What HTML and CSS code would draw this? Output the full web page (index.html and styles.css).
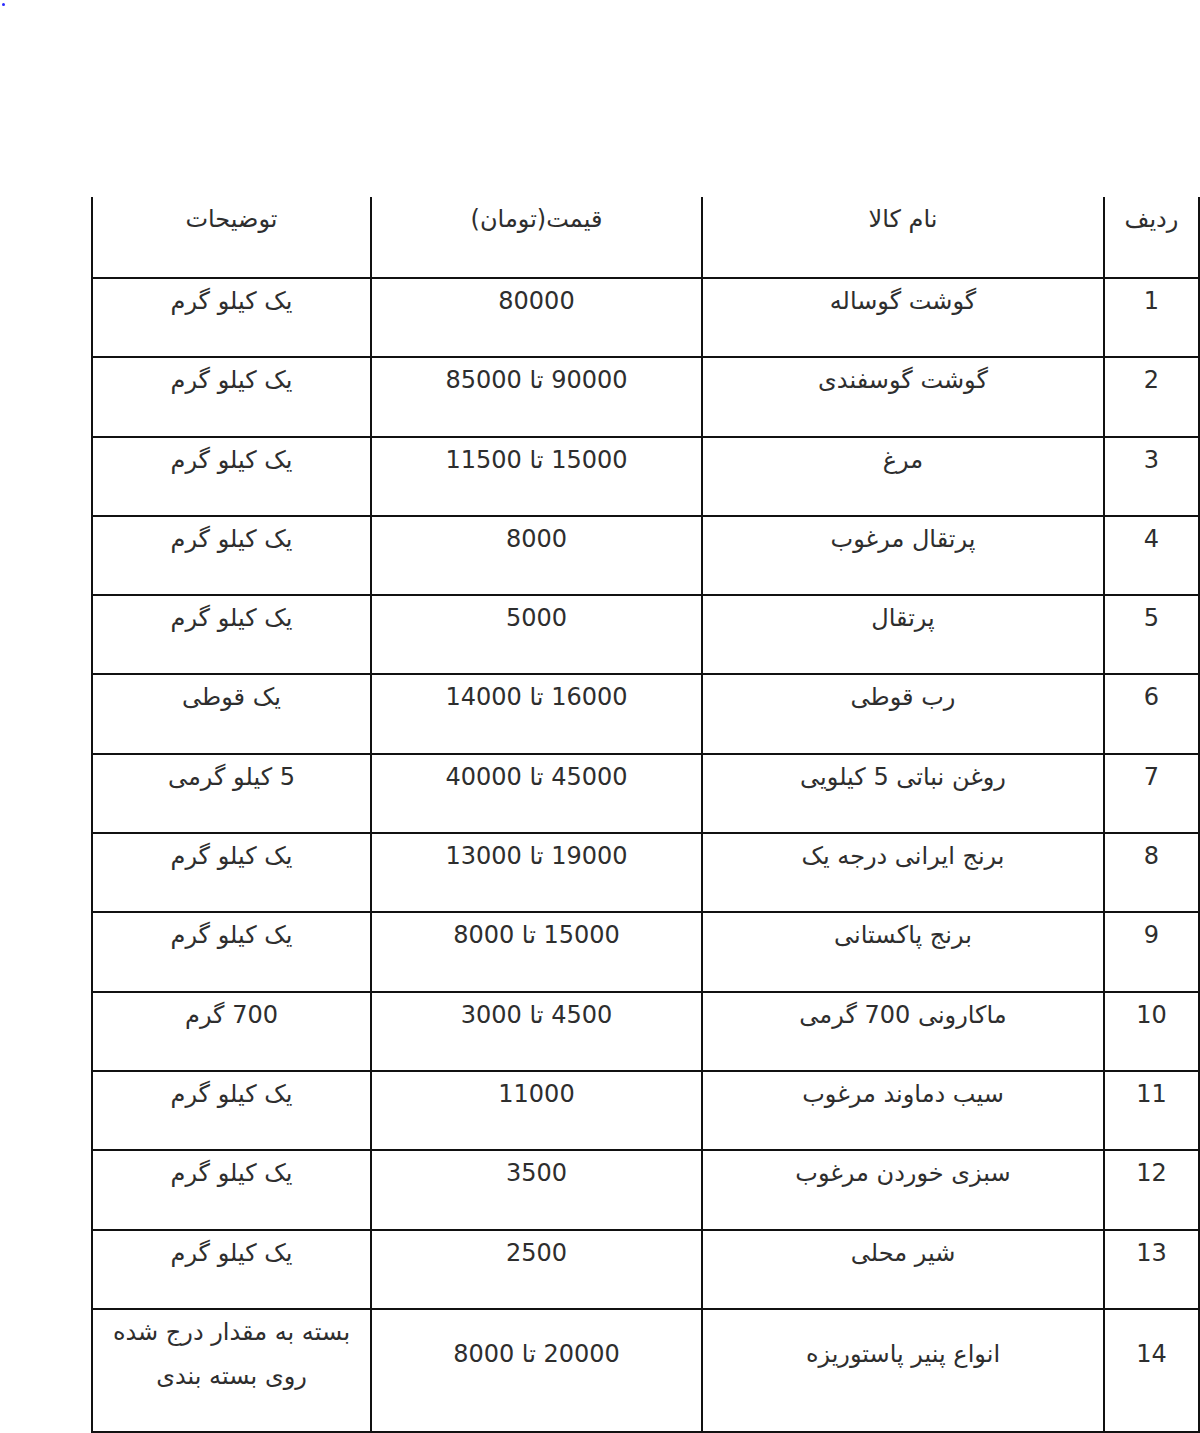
FILE: index.html
```html
<!DOCTYPE html>
<html lang="fa">
<head>
<meta charset="utf-8">
<title>قیمت کالا</title>
<link rel="stylesheet" href="styles.css">
</head>
<body>
<div class="dot"></div>
<div class="wrap">
<table class="prices" dir="rtl">
<colgroup>
<col class="c-num">
<col class="c-name">
<col class="c-price">
<col class="c-desc">
</colgroup>
<tr class="head"><td><div class="t">ردیف</div></td><td><div class="t">نام کالا</div></td><td><div class="t">قیمت(تومان)</div></td><td><div class="t">توضیحات</div></td></tr>
<tr><td><div class="t">1</div></td><td><div class="t">گوشت گوساله</div></td><td><div class="t">80000</div></td><td><div class="t">یک کیلو گرم</div></td></tr>
<tr><td><div class="t">2</div></td><td><div class="t">گوشت گوسفندی</div></td><td><div class="t">90000 تا 85000</div></td><td><div class="t">یک کیلو گرم</div></td></tr>
<tr><td><div class="t">3</div></td><td><div class="t">مرغ</div></td><td><div class="t">15000 تا 11500</div></td><td><div class="t">یک کیلو گرم</div></td></tr>
<tr><td><div class="t">4</div></td><td><div class="t">پرتقال مرغوب</div></td><td><div class="t">8000</div></td><td><div class="t">یک کیلو گرم</div></td></tr>
<tr><td><div class="t">5</div></td><td><div class="t">پرتقال</div></td><td><div class="t">5000</div></td><td><div class="t">یک کیلو گرم</div></td></tr>
<tr><td><div class="t">6</div></td><td><div class="t">رب قوطی</div></td><td><div class="t">16000 تا 14000</div></td><td><div class="t">یک قوطی</div></td></tr>
<tr><td><div class="t">7</div></td><td><div class="t">روغن نباتی 5 کیلویی</div></td><td><div class="t">45000 تا 40000</div></td><td><div class="t">5 کیلو گرمی</div></td></tr>
<tr><td><div class="t">8</div></td><td><div class="t">برنج ایرانی درجه یک</div></td><td><div class="t">19000 تا 13000</div></td><td><div class="t">یک کیلو گرم</div></td></tr>
<tr><td><div class="t">9</div></td><td><div class="t">برنج پاکستانی</div></td><td><div class="t">15000 تا 8000</div></td><td><div class="t">یک کیلو گرم</div></td></tr>
<tr><td><div class="t">10</div></td><td><div class="t">ماکارونی 700 گرمی</div></td><td><div class="t">4500 تا 3000</div></td><td><div class="t">700 گرم</div></td></tr>
<tr><td><div class="t">11</div></td><td><div class="t">سیب دماوند مرغوب</div></td><td><div class="t">11000</div></td><td><div class="t">یک کیلو گرم</div></td></tr>
<tr><td><div class="t">12</div></td><td><div class="t">سبزی خوردن مرغوب</div></td><td><div class="t">3500</div></td><td><div class="t">یک کیلو گرم</div></td></tr>
<tr><td><div class="t">13</div></td><td><div class="t">شیر محلی</div></td><td><div class="t">2500</div></td><td><div class="t">یک کیلو گرم</div></td></tr>
<tr class="last"><td><div class="t">14</div></td><td><div class="t">انواع پنیر پاستوریزه</div></td><td><div class="t">20000 تا 8000</div></td><td><div class="t desc2">بسته به مقدار درج شده<br>روی بسته بندی</div></td></tr>
</table>
</div>
</body>
</html>
```

FILE: styles.css
```css
html, body {
  margin: 0;
  padding: 0;
  background: #ffffff;
}

body {
  width: 1200px;
  height: 1433px;
  overflow: hidden;
  position: relative;
  font-family: "DejaVu Sans", "Noto Sans", sans-serif;
  color: #2e2e2e;
}

.dot {
  position: absolute;
  left: 2px;
  top: 3px;
  width: 3px;
  height: 3px;
  border-radius: 50%;
  background: #2a2aff;
}

.wrap {
  padding-top: 197px;
  padding-left: 91px;
}

.prices {
  width: 1107px;
  border-collapse: collapse;
  table-layout: fixed;
  font-size: 24px;
}

.c-num { width: 95px; }
.c-name { width: 402px; }
.c-price { width: 331px; }
.c-desc { width: 279px; }

.prices td {
  border: 2px solid #111111;
  padding: 0 4px;
  text-align: center;
  vertical-align: middle;
}

.prices tr.head td {
  border-top: none;
}

.t {
  line-height: 44px;
  margin-bottom: 33.3px;
  white-space: nowrap;
}

.head .t {
  margin-bottom: 36px;
}

.desc2 {
  line-height: 44px;
}
```
